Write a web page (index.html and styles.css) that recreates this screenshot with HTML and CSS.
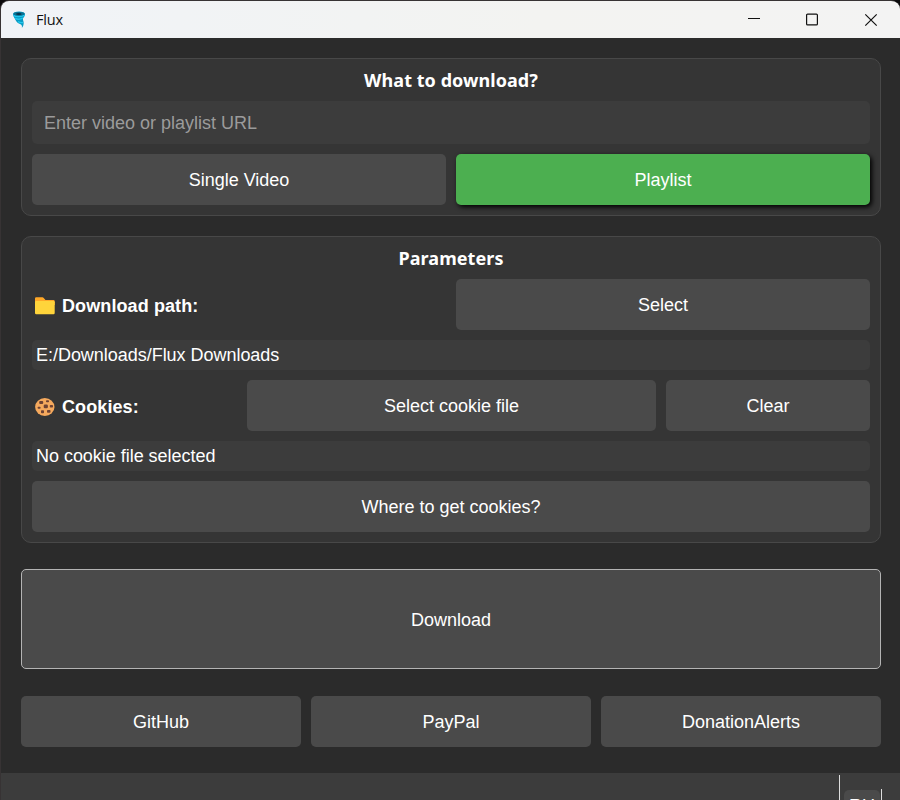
FILE: index.html
```html
<!DOCTYPE html>
<html lang="en">
<head>
<meta charset="utf-8">
<title>Flux</title>
<link rel="stylesheet" href="styles.css">
</head>
<body>
<div class="window">
  <header class="titlebar">
    <svg class="logo" width="16" height="18" viewBox="0 0 16 18">
      <path fill="#079bc4" d="M1 3C1 1.500 3.500.6 7 .6s6 .9 6 2.400c0 1.500-.8 3-1.800 4-.6 1.400.1 2.600.4 4 .4 2-.4 4.500-1.800 6 .4-1.500.2-2.500-.8-3.500C7 12.500 4.500 11.500 3.800 9.500 3 7.500 1 5.500 1 3z"/>
      <ellipse cx="7" cy="2.900" rx="5.500" ry="1.900" fill="#0b6f90"/>
      <ellipse cx="6.800" cy="3" rx="2.800" ry=".9" fill="#07364d"/>
      <path fill="none" stroke="#22c8ee" stroke-width="1.300" d="M1.500 4.200c2 1.800 8 1.800 11 .1M3.200 7.400c2 1 5.500.8 7.500-.2M6 10.700c1.500.7 3.300 1.200 5 .8"/>
    </svg>
    <span class="title">Flux</span>
    <svg class="controls" width="132" height="14" viewBox="0 0 132 14" fill="none" stroke="#111" stroke-width="1.200">
      <path d="M0 5.500h12" stroke-width="1"/>
      <rect x="58.600" y="1.100" width="10.800" height="10.800" rx="1"/>
      <path d="M117.300 1.300l11.400 11.400M128.700 1.300l-11.400 11.400"/>
    </svg>
  </header>

  <main class="content">
    <section class="card">
      <h2>What to download?</h2>
      <input class="url" type="text" placeholder="Enter video or playlist URL">
      <div class="row halves">
        <button class="btn">Single Video</button>
        <button class="btn active">Playlist</button>
      </div>
    </section>

    <section class="card params">
      <h2>Parameters</h2>
      <div class="row halves">
        <div class="label">
          <svg width="20" height="18" viewBox="0 0 20 18">
            <path fill="#ffa827" d="M0 1.500Q0 .3 1.200.3h6.300q.7 0 1.200.6L10.500 3H18.500q1.200 0 1.200 1.200V8H0z"/>
            <rect x="0" y="4" width="19.700" height="13.300" rx="1.200" fill="#ffd43b"/>
          </svg>
          <span>Download path:</span>
        </div>
        <button class="btn">Select</button>
      </div>
      <div class="value">E:/Downloads/Flux Downloads</div>
      <div class="row cookies">
        <div class="label">
          <svg width="20" height="18" viewBox="0 0 20 18">
            <ellipse cx="9.800" cy="9" rx="9.700" ry="9" fill="#f5a95d"/>
            <g fill="#6d4234">
              <rect x="4.200" y="3.100" width="4" height="2.800" rx="1"/>
              <rect x="11" y="2.200" width="3" height="2" rx=".8"/>
              <rect x="8.700" y="6.500" width="4.200" height="3.800" rx="1.300"/>
              <rect x="14.800" y="7" width="3.200" height="2.600" rx=".8"/>
              <rect x="2.600" y="8.700" width="3" height="2" rx=".8"/>
              <rect x="6" y="12.300" width="3" height="3" rx=".8"/>
              <rect x="12" y="12" width="3.500" height="2.700" rx=".8"/>
            </g>
          </svg>
          <span>Cookies:</span>
        </div>
        <button class="btn">Select cookie file</button>
        <button class="btn">Clear</button>
      </div>
      <div class="value">No cookie file selected</div>
      <button class="btn">Where to get cookies?</button>
    </section>

    <button class="btn download">Download</button>

    <nav class="row links">
      <button class="btn">GitHub</button>
      <button class="btn">PayPal</button>
      <button class="btn">DonationAlerts</button>
    </nav>
  </main>

  <footer class="statusbar">
    <div class="lang-cell"><button class="lang">RU</button></div>
  </footer>
</div>
</body>
</html>
```

FILE: styles.css
```css
* {
  box-sizing: border-box;
}

body {
  margin: 0;
  background: #0b0a0c;
  font-family: "Liberation Sans", Arial, sans-serif;
  font-size: 18px;
  color: #fff;
}

.window {
  width: 900px;
  height: 800px;
  display: flex;
  flex-direction: column;
  overflow: hidden;
  border: solid #373334;
  border-width: 1px 0 0 1px;
  border-radius: 9px 9px 0 0;
  background: #2b2b2b;
}

.titlebar {
  flex: none;
  height: 37px;
  display: flex;
  align-items: center;
  padding: 0 20px 0 11px;
  background: linear-gradient(90deg, #f0f3f7, #f3f3f1 60%, #f3f3f3);
  color: #111;
}

.logo {
  margin-right: 8px;
}

.title {
  font: 14.5px "Open Sans", "Noto Sans", sans-serif;
  letter-spacing: -0.2px;
}

.controls {
  margin-left: auto;
}

.content {
  flex: none;
  height: 735px;
  display: flex;
  flex-direction: column;
  padding: 20px 19px 0 20px;
}

.card {
  display: flex;
  flex-direction: column;
  gap: 10px;
  padding: 10px;
  border: 1px solid #484848;
  border-radius: 10px;
  background: #353535;
}

.params {
  margin-top: 20px;
}

h2 {
  height: 22px;
  margin: 0;
  font: bold 18px/22px "Noto Sans", "Open Sans", sans-serif;
  letter-spacing: 0.06px;
  text-align: center;
}

.url {
  width: 100%;
  height: 43px;
  padding: 2px 12px 0;
  border: 0;
  border-radius: 5px;
  outline: 0;
  background: #3c3c3c;
  color: #fff;
  font: inherit;
}

.url::placeholder {
  color: #9b9b9b;
}

.row {
  display: grid;
  gap: 10px;
}

.halves {
  grid-template-columns: 1fr 1fr;
}

.cookies {
  grid-template-columns: 205px 409px 204px;
}

.links {
  grid-template-columns: repeat(3, 1fr);
  margin-top: 27px;
}

.btn {
  height: 51px;
  padding: 2px 0 0;
  border: 0;
  border-radius: 5px;
  background: #4a4a4a;
  color: #fff;
  font: inherit;
}

.active {
  background: #4caf50;
  box-shadow: 2px 2px 5px #000;
}

.download {
  flex: none;
  height: 100px;
  margin-top: 26px;
  border: 1px solid #b4b4b4;
}

.label {
  display: flex;
  align-items: center;
  gap: 7px;
  padding: 3px 0 0 3px;
  font-weight: bold;
  letter-spacing: 0.1px;
}

.value {
  height: 30px;
  padding-left: 4px;
  border-radius: 5px;
  background: #3c3c3c;
  line-height: 30px;
  letter-spacing: -0.03px;
}

.statusbar {
  flex: 1;
  display: flex;
  justify-content: flex-end;
  padding: 2px 18px 0 0;
  background: #3c3c3c;
}

.lang-cell {
  width: 43px;
  height: 50px;
  padding: 15px 0 0 4px;
  border-left: 1px solid #ddd;
  background: linear-gradient(#ddd, #ddd) 100% 14px / 1px 36px no-repeat;
}

.lang {
  width: 36px;
  height: 30px;
  padding: 2px 0 0;
  border: 0;
  border-radius: 5px;
  background: #4a4a4a;
  color: #fff;
  font: inherit;
}
```
